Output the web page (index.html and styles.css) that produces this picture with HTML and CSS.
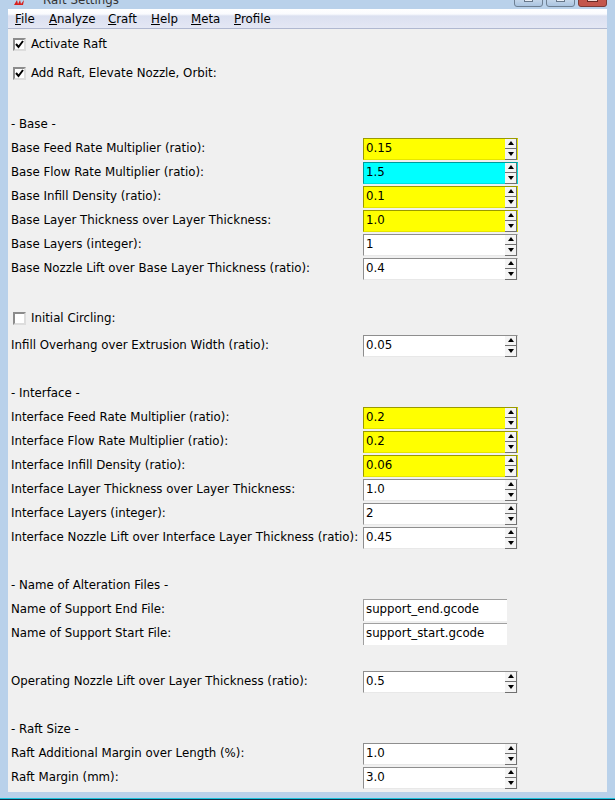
FILE: index.html
```html
<!DOCTYPE html>
<html lang="en">
<head>
<meta charset="utf-8">
<title>Raft Settings</title>
<link rel="stylesheet" href="styles.css">
</head>
<body>
<div class="window">
  <div class="titlebar">
    <svg class="app-icon" width="13" height="5" viewBox="0 0 13 5"><path d="M1 5 L4 0 L5 4 L7 0 L8 4 L11 0 L10 5 Z" fill="#d8201c"/></svg>
    <span class="title">Raft Settings</span>
    <div class="caption-buttons">
      <span class="cap"><b class="glyph"></b></span><span class="cap"><b class="glyph"></b></span><span class="cap cap-close"><b class="glyph dark"></b></span>
    </div>
  </div>
  <div class="client">
    <nav class="menubar">
      <span class="menu"><u>F</u>ile</span>
      <span class="menu"><u>A</u>nalyze</span>
      <span class="menu"><u>C</u>raft</span>
      <span class="menu"><u>H</u>elp</span>
      <span class="menu"><u>M</u>eta</span>
      <span class="menu"><u>P</u>rofile</span>
    </nav>
    <main class="content">
      <label class="check first"><span class="box"><svg width="9" height="9" viewBox="0 0 9 9"><path d="M1 4 L3.5 7 L8 1" fill="none" stroke="#000" stroke-width="2"/></svg></span>Activate Raft</label>
      <label class="check second"><span class="box"><svg width="9" height="9" viewBox="0 0 9 9"><path d="M1 4 L3.5 7 L8 1" fill="none" stroke="#000" stroke-width="2"/></svg></span>Add Raft, Elevate Nozzle, Orbit:</label>

      <div class="heading h-base">- Base -</div>
      <div class="row"><span class="lab">Base Feed Rate Multiplier (ratio):</span><div class="spin yellow"><span class="val">0.15</span><span class="arrows"><i class="up"></i><i class="down"></i></span></div></div>
      <div class="row"><span class="lab">Base Flow Rate Multiplier (ratio):</span><div class="spin cyan"><span class="val">1.5</span><span class="arrows"><i class="up"></i><i class="down"></i></span></div></div>
      <div class="row"><span class="lab">Base Infill Density (ratio):</span><div class="spin yellow"><span class="val">0.1</span><span class="arrows"><i class="up"></i><i class="down"></i></span></div></div>
      <div class="row"><span class="lab">Base Layer Thickness over Layer Thickness:</span><div class="spin yellow"><span class="val">1.0</span><span class="arrows"><i class="up"></i><i class="down"></i></span></div></div>
      <div class="row"><span class="lab">Base Layers (integer):</span><div class="spin"><span class="val">1</span><span class="arrows"><i class="up"></i><i class="down"></i></span></div></div>
      <div class="row"><span class="lab">Base Nozzle Lift over Base Layer Thickness (ratio):</span><div class="spin"><span class="val">0.4</span><span class="arrows"><i class="up"></i><i class="down"></i></span></div></div>

      <label class="check third"><span class="box"></span>Initial Circling:</label>
      <div class="row"><span class="lab">Infill Overhang over Extrusion Width (ratio):</span><div class="spin"><span class="val">0.05</span><span class="arrows"><i class="up"></i><i class="down"></i></span></div></div>

      <div class="heading">- Interface -</div>
      <div class="row"><span class="lab">Interface Feed Rate Multiplier (ratio):</span><div class="spin yellow"><span class="val">0.2</span><span class="arrows"><i class="up"></i><i class="down"></i></span></div></div>
      <div class="row"><span class="lab">Interface Flow Rate Multiplier (ratio):</span><div class="spin yellow"><span class="val">0.2</span><span class="arrows"><i class="up"></i><i class="down"></i></span></div></div>
      <div class="row"><span class="lab">Interface Infill Density (ratio):</span><div class="spin yellow"><span class="val">0.06</span><span class="arrows"><i class="up"></i><i class="down"></i></span></div></div>
      <div class="row"><span class="lab">Interface Layer Thickness over Layer Thickness:</span><div class="spin"><span class="val">1.0</span><span class="arrows"><i class="up"></i><i class="down"></i></span></div></div>
      <div class="row"><span class="lab">Interface Layers (integer):</span><div class="spin"><span class="val">2</span><span class="arrows"><i class="up"></i><i class="down"></i></span></div></div>
      <div class="row"><span class="lab">Interface Nozzle Lift over Interface Layer Thickness (ratio):</span><div class="spin"><span class="val">0.45</span><span class="arrows"><i class="up"></i><i class="down"></i></span></div></div>

      <div class="heading">- Name of Alteration Files -</div>
      <div class="row"><span class="lab">Name of Support End File:</span><div class="entry"><span class="val">support_end.gcode</span></div></div>
      <div class="row"><span class="lab">Name of Support Start File:</span><div class="entry"><span class="val">support_start.gcode</span></div></div>

      <div class="row gap"><span class="lab">Operating Nozzle Lift over Layer Thickness (ratio):</span><div class="spin"><span class="val">0.5</span><span class="arrows"><i class="up"></i><i class="down"></i></span></div></div>

      <div class="heading">- Raft Size -</div>
      <div class="row"><span class="lab">Raft Additional Margin over Length (%):</span><div class="spin"><span class="val">1.0</span><span class="arrows"><i class="up"></i><i class="down"></i></span></div></div>
      <div class="row"><span class="lab">Raft Margin (mm):</span><div class="spin"><span class="val">3.0</span><span class="arrows"><i class="up"></i><i class="down"></i></span></div></div>
    </main>
  </div>
</div>
</body>
</html>
```
FILE: styles.css
```css
html, body { margin: 0; padding: 0; }
body {
  width: 615px;
  height: 800px;
  overflow: hidden;
  font-family: "DejaVu Sans", sans-serif;
  font-size: 11.8px;
  color: #000;
}
.window {
  width: 615px;
  height: 800px;
  box-sizing: border-box;
  background: #b9d1ea;
  border-bottom: 1px solid #12304a;
  box-shadow: inset 0 -1px 0 #19c3dc;
  padding: 0 8px 7px 8px;
  display: flex;
  flex-direction: column;
  overflow: hidden;
}
.titlebar {
  height: 9px;
  flex: none;
  display: flex;
  align-items: flex-start;
  position: relative;
}
.app-icon { margin-left: 5px; }
.title {
  margin-left: 17px;
  margin-top: -7px;
  color: #333;
  line-height: 14px;
  white-space: nowrap;
}
.caption-buttons { position: absolute; right: 0; top: -4px; display: flex; gap: 3px; }
.cap {
  width: 27px;
  height: 9px;
  border: 1px solid #6d7f92;
  border-radius: 0 0 3px 3px;
  background: linear-gradient(#cfdeee, #aac4e0);
  display: flex;
  justify-content: center;
}
.cap-close { background: #c4574c; border-color: #7c3a34; }
.glyph {
  width: 9px;
  height: 5px;
  background: #e8eef6;
  border: 1px solid #66778a;
  border-top: 0;
  box-sizing: border-box;
}
.glyph.dark { width: 11px; background: #f0d8d4; border-color: #6a2a24; }
.client {
  flex: 1;
  background: #f0f0f0;
  display: flex;
  flex-direction: column;
  min-height: 0;
}
.menubar {
  height: 19px;
  flex: none;
  display: grid;
  grid-template-columns: 34px 59px 43px 40px 43px auto;
  align-items: center;
  padding-left: 7px;
  background: linear-gradient(#ffffff 0, #fafbfe 5px, #dbe0f0 7px, #e4e7f4 100%);
  border-bottom: 1px solid #b0b8d0;
}
.content { flex: 1; padding-left: 3px; }
.check { display: flex; align-items: center; height: 20px; margin-left: 2px; }
.check.first { margin-top: 5px; }
.check.second { margin-top: 9px; }
.check.third { margin-top: 28px; margin-bottom: 7px; }
.box {
  width: 9px;
  height: 9px;
  margin-right: 5px;
  background: #fff;
  border: 2px solid #8c8c8c;
  border-right-color: #ddd;
  border-bottom-color: #ddd;
  display: flex;
  align-items: center;
  justify-content: center;
}
.heading { height: 20px; line-height: 20px; margin-top: 26px; margin-bottom: 4px; }
.h-base { margin-top: 31px; }
.row { display: flex; align-items: center; height: 22px; margin-bottom: 2px; }
.row.gap { margin-top: 26px; }
.lab { width: 352px; flex: none; white-space: nowrap; padding-bottom: 2px; }
.val { flex: 1; padding-left: 2px; padding-bottom: 2px; line-height: 17px; }
.spin, .entry {
  box-sizing: border-box;
  height: 22px;
  display: flex;
  align-items: center;
  background: #fff;
  border: 1px solid #e8e8e8;
  border-top-color: #8e8e8e;
  border-left-color: #8e8e8e;
}
.spin { width: 155px; }
.entry { width: 144px; border: 0; border-top: 1px solid #a0a0a0; border-left: 1px solid #a0a0a0; }
.yellow { background: #ffff00; border-color: #9a9a00 #e6e600 #e6e600 #9a9a00; }
.cyan { background: #00ffff; border-color: #009a9a #00e0e0 #00e0e0 #009a9a; }
.arrows {
  width: 11px;
  height: 20px;
  flex: none;
  display: flex;
  flex-direction: column;
  border-right: 1px solid #707070;
  border-bottom: 1px solid #707070;
}
.arrows i {
  flex: 1;
  display: flex;
  align-items: center;
  justify-content: center;
  background: #f4f4f4;
}
.arrows i::before {
  content: "";
  width: 0;
  height: 0;
  border-left: 3.5px solid transparent;
  border-right: 3.5px solid transparent;
}
.up { border-bottom: 1px solid #707070; }
.up::before { border-bottom: 4px solid #000; }
.down::before { border-top: 4px solid #000; }
```
